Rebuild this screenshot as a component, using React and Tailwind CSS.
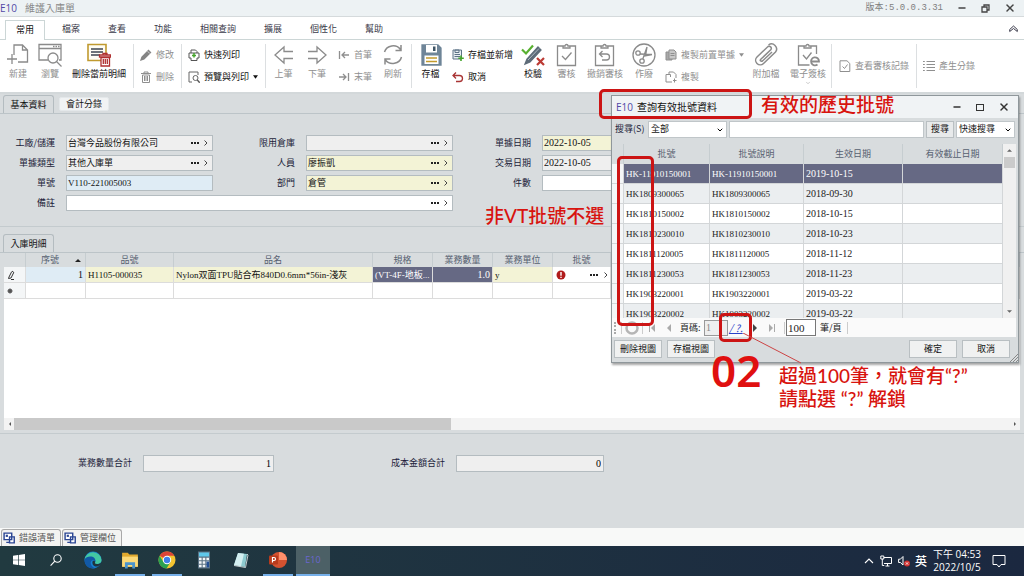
import { Minus, X, ChevronDown } from 'lucide-react';

const menus = ['檔案', '查看', '功能', '相關查詢', '擴展', '個性化', '幫助'];

const batches = [
  { no: 'HK-11910150001', date: '2019-10-15' },
  { no: 'HK1809300065', date: '2018-09-30' },
  { no: 'HK1810150002', date: '2018-10-15' },
  { no: 'HK1810230010', date: '2018-10-23' },
  { no: 'HK1811120005', date: '2018-11-12' },
  { no: 'HK1811230053', date: '2018-11-23' },
  { no: 'HK1903220001', date: '2019-03-22' },
  { no: 'HK1903220002', date: '2019-03-22' }
];

const Icon = ({ children, className = 'w-6 h-6', box = '0 0 24 24', width = 1.3 }) => (
  <svg
    viewBox={box}
    className={`shrink-0 ${className}`}
    fill="none"
    stroke="currentColor"
    strokeWidth={width}
    aria-hidden="true"
  >
    {children}
  </svg>
);

/* ---------- Ribbon icons ---------- */

const NewIcon = () => (
  <Icon>
    <path d="M8 12V2h8.500l5 5v12H12M16.500 2v5h5M1 16h10M6 11v10" />
  </Icon>
);

const BrowseIcon = () => (
  <Icon>
    <path d="M10 17H1V1.500h22V17h-2M1 5.500h22" />
    <path d="M15 3.500h1.500M17.500 3.500H19M20 3.500h1.500" />
    <circle cx="15" cy="15" r="5" fill="#fff" />
    <path d="M18.500 18.500l5 5" />
  </Icon>
);

const DeleteDetailIcon = () => (
  <Icon>
    <path d="M1 1.500h18v16H1z" stroke="#c09a30" fill="#fffdf4" strokeWidth="1.600" />
    <path d="M4 6h12M4 9h12M4 12h9" stroke="#3f4650" />
    <path d="M12.500 12h11v2h-11zM14 14.500h8.500v8.500H14z" fill="#fff" stroke="#b03030" />
    <path d="M16 12v-1.500h4V12M16.300 16v5M18.300 16v5M20.300 16v5" stroke="#b03030" />
  </Icon>
);

const PencilIcon = () => (
  <Icon className="w-3 h-3" box="0 0 12 12">
    <path d="M1 11l1-3 6.500-6.500 2 2L4 10z" fill="#858585" stroke="#858585" />
    <path d="M7.500 2.200l2.300 2.300" stroke="#fff" strokeWidth="0.600" />
  </Icon>
);

const TrashIcon = () => (
  <Icon className="w-3 h-3" box="0 0 12 12" width={1}>
    <path d="M1 2.500h10M4 2.500V1h4v1.500M2.500 4v7.500h7V4zM4.500 5v5M6 5v5M7.500 5v5" />
  </Icon>
);

const PrintIcon = () => (
  <Icon className="w-3 h-3" box="0 0 12 12" width={1}>
    <path d="M3 4V1h4.500L9 2.500V4M3 9H1V4h10v5H9M3 9v2.500h6V9" stroke="#555" />
    <path d="M6 4v4.500M4 6.500h4" stroke="#45a52b" strokeWidth="1.500" />
  </Icon>
);

const PreviewIcon = () => (
  <Icon className="w-3 h-3" box="0 0 12 12" width={1}>
    <path d="M4 11H1V1h9v3" stroke="#666" />
    <circle cx="7.500" cy="7" r="2.500" stroke="#666" />
    <path d="M9.300 9l2.400 2.700" stroke="#555" strokeWidth="1.400" />
  </Icon>
);

const LeftIcon = () => (
  <Icon>
    <path d="M21 8.500H12V4L3 12l9 8v-4.500h9" />
  </Icon>
);

const RightIcon = () => (
  <Icon>
    <path d="M3 8.500h9V4l9 8-9 8v-4.500H3" />
  </Icon>
);

const FirstIcon = () => (
  <Icon className="w-3 h-3" box="0 0 12 12">
    <path d="M1.500 2v8M11 6H4M7 3L4 6l3 3" />
  </Icon>
);

const LastIcon = () => (
  <Icon className="w-3 h-3" box="0 0 12 12">
    <path d="M10.500 2v8M1 6h7M5 3l3 3-3 3" />
  </Icon>
);

const RefreshIcon = () => (
  <Icon width={1.5}>
    <path d="M3.500 9a9 8.500 0 0 1 16-2.500M20.500 14a9 8.500 0 0 1-16 3M20 2v5.500h-5.500M4 21.500V16h5.500" />
  </Icon>
);

const SaveIcon = () => (
  <Icon>
    <path d="M3 2h16l3 3v17H3z" fill="#6f8598" stroke="#6f8598" />
    <path d="M7 2h11v7.500H7z" fill="#fff" stroke="none" />
    <path d="M14 3.500h2.500V8H14z" fill="#3f5566" stroke="none" />
    <path d="M5.500 12.500h14V21h-14z" fill="#fff" stroke="none" />
    <path d="M7 15h11M7 18.500h11" stroke="#c39b2d" strokeWidth="1.600" />
  </Icon>
);

const SaveNewIcon = () => (
  <Icon className="w-3 h-3" box="0 0 12 12" width={1}>
    <path d="M1 1h8.500v9H1z" fill="#e8eef2" stroke="#5d7386" />
    <path d="M3 1h4v2.500H3zM2.500 5.500h5.500M2.500 7.500h5.500" stroke="#5d7386" />
    <path d="M9 6.500v5.500M6.300 9.300h5.500" stroke="#45a52b" strokeWidth="1.600" />
  </Icon>
);

const UndoIcon = () => (
  <Icon className="w-3 h-3" box="0 0 12 12">
    <path d="M4 1.500L1 4.500l3 3M1 4.500h6.500a3 3 0 0 1 0 6H4" stroke="#a93434" />
  </Icon>
);

const VerifyIcon = () => (
  <Icon>
    <path d="M1 6.500l4 4L12 2.500" stroke="#58b030" strokeWidth="2.200" />
    <path d="M4 21l2-5L17 4l3 3L9 19z" fill="#5d6b78" stroke="#5d6b78" />
    <path d="M7 17L18 5.500" stroke="#c2ccd4" strokeWidth="0.800" />
    <path d="M16 15l7 7M23 15l-7 7" stroke="#bb3a34" strokeWidth="2.200" />
  </Icon>
);

const ClipIcon = ({ children }) => (
  <Icon>
    <path d="M8 3H2.500v19.500h18V3H15M8 5V3h2a1.500 1.500 0 0 1 3 0h2v2z" />
    {children}
  </Icon>
);

const VoidIcon = () => (
  <Icon>
    <circle cx="12" cy="12" r="11" />
    <circle cx="6" cy="10" r="2.200" />
    <circle cx="10" cy="18" r="2.200" />
    <path d="M8 11l12 .5M20 11.500l-8 1.500M10.800 16L15 4M15 4l-1.500 9" />
  </Icon>
);

const CopyFrontIcon = () => (
  <Icon className="w-3 h-3" box="0 0 12 12" width={1}>
    <path d="M1 3h6v8H1z" fill="#a9a9a9" />
    <path d="M4 1h5l2 2v7H4z" fill="#c8c8c8" />
    <path d="M5.500 4.500h4M5.500 6.500h4" />
  </Icon>
);

const CopyIcon = () => (
  <Icon className="w-3 h-3" box="0 0 12 12" width={1}>
    <path d="M4 3V1h4.500L11 3.500V7M1 3.500h4.500V6M1 3.500V11h6M9.500 7.500v4M8 9.500h3.500" />
  </Icon>
);

const AttachIcon = () => (
  <Icon width={1.5}>
    <path d="M6 17L17 6.500a2.200 2.200 0 0 0-3-3L3 14a4.500 4.500 0 0 0 6.500 6.500L21.500 9a5 5 0 0 0-7-7M6 17a1.800 1.800 0 0 0 2.500 1L18 9" />
  </Icon>
);

const ESignIcon = () => (
  <Icon>
    <path d="M8 3H2.500v19h11M20.500 11V3H15M8 5V3h2a1.500 1.500 0 0 1 3 0h2v2zM7 12l3.500 4 5-6.500" />
    <path d="M15 18.500h8a4 4 0 1 0-1.500 3" strokeWidth="1.800" fill="#fff" />
  </Icon>
);

const RecordIcon = () => (
  <Icon className="w-3 h-3" box="0 0 12 12" width={1}>
    <path d="M1 .8h7L10.800 3.500v8H1zM3.500 6.500l2 2 3-4" />
  </Icon>
);

const ListIcon = () => (
  <Icon className="w-[13px] h-3" box="0 0 13 12" width={1.2}>
    <path d="M4.500 1.500H13M4.500 4.500H13M4.500 7.500H13M4.500 10.500H13M1 1.500h1.800M1 4.500h1.800M1 7.500h1.800M1 10.500h1.800" />
  </Icon>
);

/* ---------- Taskbar icons ---------- */

const WindowsIcon = () => (
  <Icon className="w-3 h-3" box="0 0 12 12">
    <path d="M0 1.700l5-.7v4.700H0zM5.700.9L12 0v5.700H5.700zM0 6.300h5V11l-5-.7zM5.700 6.300H12V12l-6.300-.9z" fill="#fff" stroke="none" />
  </Icon>
);

const SearchIcon = () => (
  <Icon className="w-3 h-3" box="0 0 12 12" width={1.1}>
    <circle cx="7.500" cy="4.500" r="3.700" stroke="#fff" />
    <path d="M4.800 7.200L.6 11.600" stroke="#fff" />
  </Icon>
);

const EdgeIcon = () => (
  <Icon className="w-[18px] h-[18px]" box="0 0 18 18">
    <circle cx="9" cy="9" r="8.500" fill="#1680d0" stroke="none" />
    <path d="M.6 8.500A8.500 8.500 0 0 1 17.500 9c0 3-2.500 4-4.500 4-2.500 0-2.500-1-1.800-2 .8-1.500-.5-4-3.700-4C4 7 1.500 8 .6 8.500z" fill="#43c8a2" stroke="none" />
    <path d="M.6 8.500C1.500 6 5 5 7.500 5.500c3 .5 4.500 3 3.700 5.500-.7-2-3-2.500-4-1-1.500 2.500 0 6 4 7.200C5 18.500 0 14 .6 8.500z" fill="#1259a5" stroke="none" />
    <path d="M11.200 11c-.7 1-.5 2 1.800 2 2 0 3.500-.5 4.300-2 0 2-2 4.500-5 4.500S8 13 8.500 10.500c.7-1 2.200-.8 2.700.5z" fill="#20343c" stroke="none" />
  </Icon>
);

const FolderIcon = () => (
  <Icon className="w-[18px] h-[18px]" box="0 0 16 16">
    <path d="M1 1.500h5l1.500 1.700H15V14H1z" fill="#e0a92e" stroke="none" />
    <path d="M1 5h14v9H1z" fill="#fbd978" stroke="none" />
    <path d="M3.500 15.500V10h9v5.500H10v-3H6v3z" fill="#4a93cc" stroke="none" />
  </Icon>
);

const ChromeIcon = () => (
  <Icon className="w-[18px] h-[18px]" box="0 0 18 18">
    <circle cx="9" cy="9" r="8.500" fill="#f4c430" stroke="none" />
    <path d="M9 9L1.600 4.750A8.500 8.500 0 0 1 16.400 4.750H9z" fill="#dd4437" stroke="none" />
    <path d="M1.600 4.750A8.500 8.500 0 0 0 8.500 17.500L12.500 11 9 9 5.500 11z" fill="#2ba150" stroke="none" />
    <circle cx="9" cy="9" r="4.200" fill="#fff" stroke="none" />
    <circle cx="9" cy="9" r="3.200" fill="#3f7fe8" stroke="none" />
  </Icon>
);

const CalcIcon = () => (
  <Icon className="w-[14px] h-[18px]" box="0 0 14 18">
    <path d="M1 .5h12v17H1z" fill="#5c7385" stroke="none" />
    <path d="M2 1.500h10v4H2z" fill="#5fc8ea" stroke="none" />
    <path d="M2 8h10M2 11.500h10M2 15h10" stroke="#f2f5f7" strokeWidth="2.400" strokeDasharray="2.600 1.100" />
    <path d="M9.500 10.500H12v6H9.500z" fill="#244f92" stroke="none" />
  </Icon>
);

const NoteIcon = () => (
  <Icon className="w-4 h-4" box="0 0 16 16">
    <path d="M5 1l9 1-2 13-11-2z" fill="#8ecbd0" stroke="none" />
    <path d="M5 1l6 .7-3 12.500L1 13z" fill="#d3eef0" stroke="none" />
    <path d="M14 2l1 1-2.500 12.500L1 13.500" stroke="#ecf3f3" strokeWidth="0.800" />
  </Icon>
);

const PptIcon = () => (
  <Icon className="w-[18px] h-[18px]" box="0 0 18 18">
    <circle cx="10" cy="9" r="8" fill="#d35230" stroke="none" />
    <path d="M10 1a8 8 0 0 1 8 8h-8z" fill="#ff8f6b" stroke="none" />
    <rect x="0" y="4.500" width="9" height="9" rx="1" fill="#b83b1d" stroke="none" />
    <path d="M3.500 11.500v-5H5a1.500 1.500 0 0 1 0 3H3.500" stroke="#fff" strokeWidth="1.200" />
  </Icon>
);

/* ---------- Ribbon pieces ---------- */

const BigButton = ({ icon, label, className, enabled, arrow }) => (
  <button type="button" className={`flex flex-col items-center pt-[3px] whitespace-nowrap ${className}`}>
    <span className="flex text-[#8b8b8b]">{icon}</span>
    <span className={`leading-3 mt-px ${enabled ? 'text-[#111]' : 'text-[#8f8f8f]'}`}>{label}</span>
    {arrow && <ChevronDown className="w-[6px] h-[6px] text-[#999]" />}
  </button>
);

const SmallButton = ({ icon, label, enabled, arrow }) => (
  <button
    type="button"
    className={`flex items-center gap-1 h-[22px] whitespace-nowrap ${enabled ? 'text-[#111]' : 'text-[#8f8f8f]'}`}
  >
    {icon}
    <span>{label}</span>
    {arrow && (
      <svg viewBox="0 0 6 4" className="w-[5px] h-[4px]" aria-hidden="true">
        <path d="M0 0h6L3 4z" fill="currentColor" />
      </svg>
    )}
  </button>
);

const Separator = () => <div className="w-px shrink-0 my-1 bg-[#dcdfe1]" />;

const Ribbon = () => (
  <div className="flex h-[54px] pl-px bg-white border-b-2 border-[#d3d8da]">
    <BigButton className="w-[34px]" icon={<NewIcon />} label="新建" />
    <BigButton className="w-[30px]" icon={<BrowseIcon />} label="瀏覽" />
    <BigButton className="w-[68px]" icon={<DeleteDetailIcon />} label="刪除當前明細" enabled />
    <Separator />
    <div className="w-[47px] pl-[6px] pt-1">
      <SmallButton icon={<PencilIcon />} label="修改" />
      <SmallButton icon={<TrashIcon />} label="刪除" />
    </div>
    <Separator />
    <div className="w-[83px] pl-[6px] pt-1">
      <SmallButton icon={<PrintIcon />} label="快速列印" enabled />
      <SmallButton icon={<PreviewIcon />} label="預覽與列印" enabled arrow />
    </div>
    <Separator />
    <BigButton className="w-[35px]" icon={<LeftIcon />} label="上筆" />
    <BigButton className="w-[32px]" icon={<RightIcon />} label="下筆" />
    <div className="w-[42px] pl-[5px] pt-1">
      <SmallButton icon={<FirstIcon />} label="首筆" />
      <SmallButton icon={<LastIcon />} label="末筆" />
    </div>
    <BigButton className="w-[36px]" icon={<RefreshIcon />} label="刷新" />
    <Separator />
    <BigButton className="w-[37px]" icon={<SaveIcon />} label="存檔" enabled />
    <div className="w-[67px] pl-[3px] pt-1">
      <SmallButton icon={<SaveNewIcon />} label="存檔並新增" enabled />
      <SmallButton icon={<UndoIcon />} label="取消" enabled />
    </div>
    <BigButton className="w-[34px]" icon={<VerifyIcon />} label="校驗" enabled />
    <BigButton
      className="w-[33px]"
      icon={<ClipIcon><path d="M7 13l3.500 3.500 6-7" /></ClipIcon>}
      label="審核"
    />
    <BigButton
      className="w-[44px]"
      icon={<ClipIcon><path d="M9.500 8L6.500 11l3 3M6.500 11h7a3 3 0 0 1 0 6H9" /></ClipIcon>}
      label="撤銷審核"
    />
    <BigButton className="w-[34px]" icon={<VoidIcon />} label="作廢" />
    <div className="w-[86px] pl-[4px] pt-1">
      <SmallButton icon={<CopyFrontIcon />} label="複製前置單據" arrow />
      <SmallButton icon={<CopyIcon />} label="複製" />
    </div>
    <BigButton className="w-[38px]" icon={<AttachIcon />} label="附加檔" />
    <BigButton className="w-[46px]" icon={<ESignIcon />} label="電子簽核" arrow />
    <Separator />
    <div className="flex items-center w-[84px] pl-[7px]">
      <SmallButton icon={<RecordIcon />} label="查看審核記錄" />
    </div>
    <Separator />
    <div className="flex items-center pl-[5px]">
      <SmallButton icon={<ListIcon />} label="產生分錄" />
    </div>
  </div>
);

/* ---------- Form ---------- */

const Field = ({ id, label, value = '', tone = 'bg-[#efefef]', lookup, className = '', size = 'text-[9px]' }) => (
  <>
    <label htmlFor={id} className="text-right text-[#1c1c3a] whitespace-nowrap">{label}</label>
    <div className={`flex items-center h-4 border border-[#b4bcc0] ${tone} ${className}`}>
      <input
        id={id}
        defaultValue={value}
        className={`flex-1 min-w-0 h-[14px] px-px pb-px outline-none text-[#111] font-['Liberation_Serif','Noto_Sans_CJK_TC',serif] ${size}`}
      />
      {lookup && (
        <>
          <button type="button" aria-label={`${label} 開窗`} className="w-[10px] flex justify-center">
            <svg viewBox="0 0 8 2" className="w-2 h-[2px]" aria-hidden="true">
              <path d="M0 0h2v2H0zM3 0h2v2H3zM6 0h2v2H6z" fill="#222" />
            </svg>
          </button>
          <button type="button" aria-label={`${label} 明細`} className="w-[12px] flex justify-center">
            <svg viewBox="0 0 4 6" className="w-1 h-[6px]" fill="none" stroke="#444" aria-hidden="true">
              <path d="M.5.5L3 3 .5 5.500" />
            </svg>
          </button>
        </>
      )}
    </div>
  </>
);

const TabHeader = ({ children }) => (
  <div className="flex items-end gap-[5px] pl-[3px] border-b border-[#bcc4c8]">{children}</div>
);

const tabClass = 'h-[18px] w-[51px] rounded-t-[3px] border border-b-0 border-[#b4bcc0] bg-[#d8dcde] text-[#111] whitespace-nowrap';

const HeaderForm = () => (
  <section className="pt-px">
    <TabHeader>
      <button type="button" className={tabClass}>基本資料</button>
      <button type="button" className="h-[14px] w-[50px] mb-[2px] rounded-[2px] border border-[#e4e8ea] bg-[#f1f3f4] text-[#111] leading-3 whitespace-nowrap">
        會計分錄
      </button>
    </TabHeader>
    <div className="grid grid-cols-[52px_147px_71px_147px_67px_147px] gap-x-[11px] gap-y-1 items-center pl-[3px] pt-[21px] pb-[15px] border-b border-[#c4cbce]">
      <Field id="plant" label="工廠/儲運" value="台灣今品股份有限公司" lookup />
      <Field id="warehouse" label="限用倉庫" lookup />
      <Field id="docDate" label="單據日期" value="2022-10-05" tone="bg-[#f3f3d6]" size="text-[10px]" />
      <Field id="docType" label="單據類型" value="其他入庫單" lookup />
      <Field id="person" label="人員" value="廖振凱" tone="bg-[#f3f3d6]" lookup />
      <Field id="tradeDate" label="交易日期" value="2022-10-05" size="text-[10px]" />
      <Field id="docNo" label="單號" value="V110-221005003" tone="bg-[#dfecf5]" />
      <Field id="dept" label="部門" value="倉管" tone="bg-[#f3f3d6]" lookup />
      <Field id="pieces" label="件數" tone="bg-white" />
      <Field id="remark" label="備註" tone="bg-white" className="col-span-3" lookup />
    </div>
  </section>
);

/* ---------- Detail grid ---------- */

const th = 'h-[14px] p-0 font-normal text-[#566070] border-r border-[#c6cdd0] whitespace-nowrap';
const td = 'h-4 p-0 px-[2px] border-r border-b border-[#dcdcdc] whitespace-nowrap overflow-hidden';

const DetailGrid = () => (
  <section className="flex flex-col flex-1 pt-[7px] pb-[3px] border-b border-[#c4cbce]">
    <TabHeader>
      <button type="button" className={tabClass}>入庫明細</button>
    </TabHeader>
    <div className="flex flex-col flex-1 ml-1 mr-1 bg-white">
      <div className="flex-1">
        <table className="w-full table-fixed border-separate border-spacing-0">
          <colgroup>
            <col className="w-[22px]" />
            <col className="w-[60px]" />
            <col className="w-[88px]" />
            <col className="w-[199px]" />
            <col className="w-[60px]" />
            <col className="w-[60px]" />
            <col className="w-[60px]" />
            <col className="w-[58px]" />
            <col />
          </colgroup>
          <thead className="bg-[#d8dcde]">
            <tr>
              <th className={th}></th>
              <th className={th}>
                <span className="flex items-center justify-end gap-4 pr-1">
                  序號
                  <svg viewBox="0 0 6 3" className="w-[6px] h-[3px]" aria-hidden="true"><path d="M0 3L3 0l3 3z" fill="#222" /></svg>
                </span>
              </th>
              <th className={th}>品號</th>
              <th className={th}>品名</th>
              <th className={th}>規格</th>
              <th className={th}>業務數量</th>
              <th className={th}>業務單位</th>
              <th className={th}>批號</th>
              <th className={th}></th>
            </tr>
          </thead>
          <tbody className="font-['Liberation_Serif','Noto_Sans_CJK_TC',serif] text-[#111]">
            <tr>
              <td className={`${td} bg-[#f4f6f7]`}>
                <svg viewBox="0 0 8 10" className="w-2 h-[10px] ml-px" fill="none" stroke="#333" aria-hidden="true">
                  <path d="M2 7l2.500-5a1 1 0 0 1 2 1L4 8 1.500 8.500zM4 9.500h3" />
                </svg>
              </td>
              <td className={`${td} bg-[#dfecf5] text-right text-[10px]`}>1</td>
              <td className={`${td} bg-[#f3f3d6]`}>H1105-000035</td>
              <td className={`${td} bg-[#f3f3d6]`}>Nylon双面TPU貼合布840D0.6mm*56in-淺灰</td>
              <td className={`${td} bg-[#666984] text-white`}>(VT-4F-地板...</td>
              <td className={`${td} bg-[#666984] text-white text-right text-[10px]`}>1.0</td>
              <td className={`${td} bg-[#f3f3d6]`}>y</td>
              <td className={td}>
                <span className="flex items-center">
                  <svg viewBox="0 0 10 10" className="w-[10px] h-[10px] ml-px" aria-hidden="true">
                    <circle cx="5" cy="5" r="4.500" fill="#b01b1b" />
                    <path d="M4.300 2h1.400v3.800H4.300zM4.300 6.700h1.400V8H4.300z" fill="#fff" />
                  </svg>
                  <svg viewBox="0 0 8 2" className="w-2 h-[2px] ml-auto" aria-hidden="true">
                    <path d="M0 0h2v2H0zM3 0h2v2H3zM6 0h2v2H6z" fill="#222" />
                  </svg>
                  <svg viewBox="0 0 4 6" className="w-1 h-[6px] ml-[6px]" fill="none" stroke="#444" aria-hidden="true">
                    <path d="M.5.5L3 3 .5 5.500" />
                  </svg>
                </span>
              </td>
              <td className={td}></td>
            </tr>
            <tr>
              <td className={`${td} bg-[#f4f6f7]`}>
                <svg viewBox="0 0 6 6" className="w-[6px] h-[6px] ml-px" stroke="#555" aria-hidden="true">
                  <circle cx="3" cy="3" r="1.500" fill="#555" />
                  <path d="M3 0v6M0 3h6M1 1l4 4M5 1L1 5" strokeWidth="0.700" />
                </svg>
              </td>
              {[1, 2, 3, 4, 5, 6, 7, 8].map(n => <td key={n} className={td}></td>)}
            </tr>
          </tbody>
        </table>
      </div>
      <div className="flex items-center h-3 bg-[#f3f3f3]">
        <svg viewBox="0 0 10 8" className="w-[10px] h-2" aria-hidden="true"><path d="M7 2v4L5 4z" fill="#555" /></svg>
        <div className="w-[43%] h-full bg-[#c9c9c9]" />
        <svg viewBox="0 0 10 8" className="w-[10px] h-2 ml-auto" aria-hidden="true"><path d="M4 2v4l2-2z" fill="#555" /></svg>
      </div>
    </div>
  </section>
);

const Totals = () => (
  <section className="flex items-start h-[94px] pt-[21px] pl-[78px]">
    <label htmlFor="qtyTotal" className="leading-4 w-[65px] text-[#1c1c3a]">業務數量合計</label>
    <input id="qtyTotal" readOnly value="1" className="w-[131px] h-[17px] px-[2px] pb-px text-right text-[10px] font-['Liberation_Serif',serif] bg-[#efefef] border border-[#b4bcc0]" />
    <label htmlFor="costTotal" className="leading-4 w-[65px] ml-[117px] text-[#1c1c3a]">成本金額合計</label>
    <input id="costTotal" readOnly value="0" className="w-[148px] h-[17px] px-[2px] pb-px text-right text-[10px] font-['Liberation_Serif',serif] bg-[#efefef] border border-[#b4bcc0]" />
  </section>
);

const PanelTab = ({ label }) => (
  <button type="button" className="flex items-center gap-1 w-[60px] h-[17px] pl-px rounded-t-[3px] border border-b-0 border-[#a9a9a9] bg-[#f3f3f1] text-[#555] whitespace-nowrap">
    <svg viewBox="0 0 11 11" className="w-3 h-3 shrink-0" fill="#fff" stroke="#2a4593" strokeWidth="1.300" aria-hidden="true">
      <path d="M1 1h7v6H1zM3 9.500h3M6 4.500h4.300V10H6z" />
      <path d="M2.500 2.500h2v2h-2z" fill="#2a4593" stroke="none" />
    </svg>
    {label}
  </button>
);

/* ---------- Batch lookup dialog ---------- */

const dialogButton = 'h-[18px] w-12 border border-[#b9bfc2] bg-[#f0f1f1] text-[#111] whitespace-nowrap';
const dth = 'h-5 p-0 font-normal text-[#566070] border-r border-[#c6cdd0]';
const dtd = 'h-5 p-0 px-[2px] border-r border-b border-[#d3d6d8] whitespace-nowrap';

const PagerArrow = ({ d, label, color = '#aaa' }) => (
  <button type="button" aria-label={label} className="w-[17px] flex justify-center">
    <svg viewBox="0 0 8 8" className="w-2 h-2" fill={color} aria-hidden="true"><path d={d} /></svg>
  </button>
);

const BatchDialog = () => (
  <section
    role="dialog"
    aria-label="查詢有效批號資料"
    className="absolute left-[611px] top-[95px] w-[408px] bg-[#d8dcde] border border-[#8f979b] shadow-[1px_2px_2px_rgba(0,0,0,0.35)]"
  >
    <div className="flex items-center h-[22px] pl-1 pr-2 bg-[#f0f3f5]">
      <span className="text-[10px] text-[#5148a6] font-['Open_Sans',sans-serif]">E10</span>
      <h2 className="ml-1 text-[10px] text-[#111]">查詢有效批號資料</h2>
      <div className="flex items-center gap-[14px] ml-auto text-[#333]">
        <button type="button" aria-label="最小化"><Minus className="w-[10px] h-[10px]" strokeWidth={4} /></button>
        <button type="button" aria-label="最大化" className="w-2 h-[7px] border border-[#333]"></button>
        <button type="button" aria-label="關閉"><X className="w-3 h-3" strokeWidth={3} /></button>
      </div>
    </div>

    <div className="flex items-center h-[26px] pl-[3px] pr-[3px] pb-[6px] pt-[2px]">
      <label htmlFor="scope" className="w-[33px] whitespace-nowrap text-[#1c1c3a]">搜尋(S)</label>
      <div className="relative w-[79px]">
        <select id="scope" className="appearance-none w-full h-[17px] pl-[2px] bg-white border border-[#c0c6c9] text-[#111]">
          <option>全部</option>
        </select>
        <ChevronDown className="absolute right-[3px] top-[5px] w-2 h-2 pointer-events-none" strokeWidth={3} />
      </div>
      <input aria-label="搜尋內容" className="flex-1 min-w-0 h-[17px] ml-[2px] bg-white border border-[#c0c6c9]" />
      <button type="button" className="w-7 h-[17px] ml-[2px] border border-[#b9bfc2] bg-[#e8eaeb] text-[#111]">搜尋</button>
      <div className="relative w-[59px] ml-[2px]">
        <select aria-label="搜尋方式" className="appearance-none w-full h-[17px] pl-[2px] bg-white border border-[#c0c6c9] text-[#111]">
          <option>快速搜尋</option>
        </select>
        <ChevronDown className="absolute right-[3px] top-[5px] w-2 h-2 pointer-events-none" strokeWidth={3} />
      </div>
    </div>

    <div className="flex h-[174px] mr-[2px] overflow-hidden">
      <table className="flex-1 h-fit table-fixed border-separate border-spacing-0">
        <colgroup>
          <col className="w-3" />
          <col className="w-[86px]" />
          <col className="w-[94px]" />
          <col className="w-[99px]" />
          <col />
        </colgroup>
        <thead>
          <tr>
            <th className={dth}></th>
            <th className={dth}>批號</th>
            <th className={dth}>批號說明</th>
            <th className={dth}>生效日期</th>
            <th className={dth}>有效截止日期</th>
          </tr>
        </thead>
        <tbody className="font-['Liberation_Serif',serif]">
          {batches.map((b, i) => (
            <tr
              key={b.no}
              className={i === 0 ? 'bg-[#666984] text-white' : i % 2 ? 'bg-[#ebeef0] text-[#222]' : 'bg-white text-[#222]'}
            >
              <td className={`${dtd} bg-[#f4f6f7]`}></td>
              <td className={dtd}>{b.no}</td>
              <td className={dtd}>{b.no}</td>
              <td className={`${dtd} text-[10px]`}>{b.date}</td>
              <td className={dtd}></td>
            </tr>
          ))}
        </tbody>
      </table>
      <div className="flex flex-col items-center w-[13px] bg-[#f0f0f0]">
        <svg viewBox="0 0 6 3" className="w-[5px] h-[3px] my-[5px]" aria-hidden="true"><path d="M0 3L3 0l3 3z" fill="#666" /></svg>
        <div className="w-[11px] h-[11px] bg-[#cbcbcb]" />
        <svg viewBox="0 0 6 3" className="w-[5px] h-[3px] mt-auto mb-[5px]" aria-hidden="true"><path d="M0 0h6L3 3z" fill="#666" /></svg>
      </div>
    </div>

    <div className="flex items-center h-[19px] mr-[2px] pl-[2px] bg-[#fafafa] text-[#222]">
      <div className="h-3 border-l-2 border-dotted border-[#aaa]" />
      <div className="w-px h-3 ml-[5px] bg-[#ccc]" />
      <svg viewBox="0 0 14 14" className="w-[14px] h-[14px] mx-[3px]" fill="none" stroke="#b5b5b5" strokeWidth="2.500" aria-hidden="true">
        <circle cx="7" cy="7" r="5.500" />
      </svg>
      <div className="w-px h-3 bg-[#ccc]" />
      <PagerArrow label="首頁" d="M1 0h1v8H1zM7 0v8L3 4z" />
      <PagerArrow label="上一頁" d="M6 0v8L2 4z" />
      <label htmlFor="page" className="ml-[3px] w-6 whitespace-nowrap">頁碼:</label>
      <input id="page" defaultValue="1" className="w-6 h-4 px-px text-[10px] text-[#888] font-['Liberation_Serif',serif] bg-[#eee] border border-[#999]" />
      <a href="#unlock" className="w-[17px] ml-px text-[10px] text-[#2a43c8] underline italic">/ ?.</a>
      <PagerArrow label="下一頁" d="M2 0v8l4-4z" color="#444" />
      <PagerArrow label="末頁" d="M6 0h1v8H6zM1 0v8l4-4z" />
      <div className="w-px h-3 ml-1 mr-px bg-[#ccc]" />
      <input aria-label="每頁筆數" id="pageSize" defaultValue="100" className="w-[30px] h-[17px] px-px text-[11px] font-['Liberation_Serif',serif] bg-white border border-[#777]" />
      <label htmlFor="pageSize" className="ml-1">筆/頁</label>
      <div className="w-px h-3 ml-[5px] bg-[#ccc]" />
    </div>

    <div className="flex items-start justify-between h-[25px] pl-[2px]">
      <div className="flex gap-[5px] pt-[3px]">
        <button type="button" className={dialogButton}>刪除視圖</button>
        <button type="button" className={dialogButton}>存檔視圖</button>
      </div>
      <div className="flex gap-[5px] pt-[3px] ml-auto">
        <button type="button" className={dialogButton}>確定</button>
        <button type="button" className={dialogButton}>取消</button>
      </div>
      <svg viewBox="0 0 8 8" className="w-2 h-2 self-end" stroke="#888" aria-hidden="true">
        <path d="M0 8L8 0M3 8l5-5M6 8l2-2" />
      </svg>
    </div>
  </section>
);

/* ---------- Tutorial notes over the window ---------- */

const noteText = "absolute whitespace-nowrap font-medium text-[#d8140f] text-[19px] leading-[23px] font-['Lato','Noto_Sans_CJK_TC',sans-serif]";
const noteBox = 'absolute border-3 border-[#cc1414] rounded-[5px]';

const Notes = () => (
  <div className="absolute inset-0 pointer-events-none">
    <div className={`${noteBox} left-[599px] top-[89px] w-[153px] h-[30px]`} />
    <div className={`${noteBox} left-[617px] top-[156px] w-[37px] h-[170px]`} />
    <div className={`${noteBox} left-[719px] top-[313px] w-[33px] h-[29px]`} />
    <svg viewBox="0 0 60 32" className="absolute left-[743px] top-[333px] w-[60px] h-8" stroke="#c44" aria-hidden="true">
      <path d="M0 0l58 30" />
    </svg>
    <p className={`${noteText} left-[761px] top-[93px]`}>有效的歷史批號</p>
    <p className={`${noteText} left-[485px] top-[204px]`}>非VT批號不選</p>
    <p className="absolute left-[711px] top-[346px] text-[44px] leading-[48px] font-semibold text-[#e01010] font-['Noto_Sans',sans-serif]">02</p>
    <p className={`${noteText} left-[779px] top-[364px]`}>
      超過100筆，就會有“?”<br />請點選 “?” 解鎖
    </p>
  </div>
);

/* ---------- Taskbar ---------- */

const TaskItem = ({ label, icon, open }) => (
  <button type="button" aria-label={label} className="flex flex-col items-center w-[37px]">
    <span className="flex flex-1 items-center">{icon}</span>
    <span className={`w-[30px] h-[2px] ${open ? 'bg-[#76b0ea]' : ''}`} />
  </button>
);

const Taskbar = () => (
  <footer className="flex h-[30px] bg-linear-to-r from-[#213a40] to-[#1b2840] text-white">
    <TaskItem label="開始" icon={<WindowsIcon />} />
    <TaskItem label="搜尋" icon={<SearchIcon />} />
    <TaskItem label="Edge" icon={<EdgeIcon />} />
    <TaskItem label="檔案總管" icon={<FolderIcon />} open />
    <TaskItem label="Chrome" icon={<ChromeIcon />} open />
    <TaskItem label="小算盤" icon={<CalcIcon />} />
    <TaskItem label="記事本" icon={<NoteIcon />} />
    <TaskItem label="PowerPoint" icon={<PptIcon />} open />
    <button type="button" className="w-[34px] border-b-2 border-[#76b0ea] bg-[#4c6066] text-[#6a66d0] font-['Open_Sans',sans-serif]">
      E10
    </button>
    <div className="flex items-center ml-auto pr-[18px]">
      <Icon className="w-[10px] h-[10px]" box="0 0 10 10" width={1.1}><path d="M1 7l4-4 4 4" /></Icon>
      <Icon className="w-3 h-3 ml-[6px]" box="0 0 12 12" width={1}>
        <path d="M4 2.500h7.500v6H4M5.500 11h4M7.500 8.500V11M.8 1h3v3h-3zM2.300 4v6.500h2" />
      </Icon>
      <Icon className="w-3 h-3 ml-[6px]" box="0 0 12 12" width={1}>
        <path d="M.6 4.200h1.800L5 1.500v8.500L2.400 7.500H.6z" />
        <circle cx="9" cy="8.500" r="3" fill="#d03030" stroke="none" />
        <path d="M7.800 7.300l2.400 2.400M10.200 7.300L7.800 9.700" strokeWidth="0.800" />
      </Icon>
      <span className="ml-[5px] text-xs font-medium">英</span>
      <div className="ml-[5px] w-[50px] text-center text-[10px] leading-[13px] whitespace-nowrap font-['Open_Sans','Noto_Sans_CJK_TC',sans-serif]">
        下午 04:53<br />2022/10/5
      </div>
      <Icon className="w-[14px] h-[14px] ml-[10px]" box="0 0 14 14" width={1}>
        <path d="M1 1.500h12v9H9L7 13l-2-2.500H1z" />
      </Icon>
    </div>
  </footer>
);

const App = () => (
  <div className="relative flex flex-col min-h-screen overflow-hidden bg-[#d8dcde] text-[9px] leading-3 font-['Noto_Sans_CJK_TC',sans-serif]">
    {/* Title bar */}
    <header className="flex items-center h-[17px] pr-2 bg-[#edf2f4] border-b border-[#d5dadc]">
      <span className="text-[10px] text-[#5148a6] font-['Open_Sans',sans-serif]">E10</span>
      <h1 className="ml-2 text-[10px] text-[#8a8a8a]">維護入庫單</h1>
      <span className="ml-auto text-[#808080] font-['Liberation_Mono','Noto_Sans_CJK_TC',monospace]">版本:5.0.0.3.31</span>
      <div className="flex items-center gap-[14px] ml-[14px] text-[#444]">
        <button type="button" aria-label="最小化"><Minus className="w-[10px] h-[10px]" strokeWidth={4} /></button>
        <button type="button" aria-label="還原">
          <Icon className="w-[9px] h-[9px]" box="0 0 9 9"><path d="M1 3h5v5H1zM3 3V1h5v5H6" /></Icon>
        </button>
        <button type="button" aria-label="關閉"><X className="w-3 h-3" strokeWidth={3} /></button>
      </div>
    </header>

    {/* Menu */}
    <nav className="flex items-end gap-[6px] h-[23px] pl-[5px] pr-[6px] bg-white border-b border-[#ccd6d6] text-[#3a3a4a]">
      <button type="button" className="h-5 px-[10px] pb-[2px] -mb-px bg-white border-x border-t border-[#ccd6d6] text-[#111]">常用</button>
      {menus.map(m => (
        <button key={m} type="button" className="h-5 px-[11px] pb-px whitespace-nowrap">{m}</button>
      ))}
      <button type="button" aria-label="收合" className="ml-auto h-5">
        <Icon className="w-[9px] h-2" box="0 0 9 8" width={1}><path d="M.7 4.500l3.800-3.500 3.800 3.500v2L4.500 3.500.7 6.500z" /></Icon>
      </button>
    </nav>

    <Ribbon />

    <main className="flex flex-col flex-1">
      <HeaderForm />
      <DetailGrid />
      <Totals />
    </main>

    <div className="flex items-end gap-px h-[18px] pl-px bg-[#f8f9f8]">
      <PanelTab label="錯誤清單" />
      <PanelTab label="管理欄位" />
    </div>
    <Taskbar />

    <BatchDialog />
    <Notes />
  </div>
);

export default App;
